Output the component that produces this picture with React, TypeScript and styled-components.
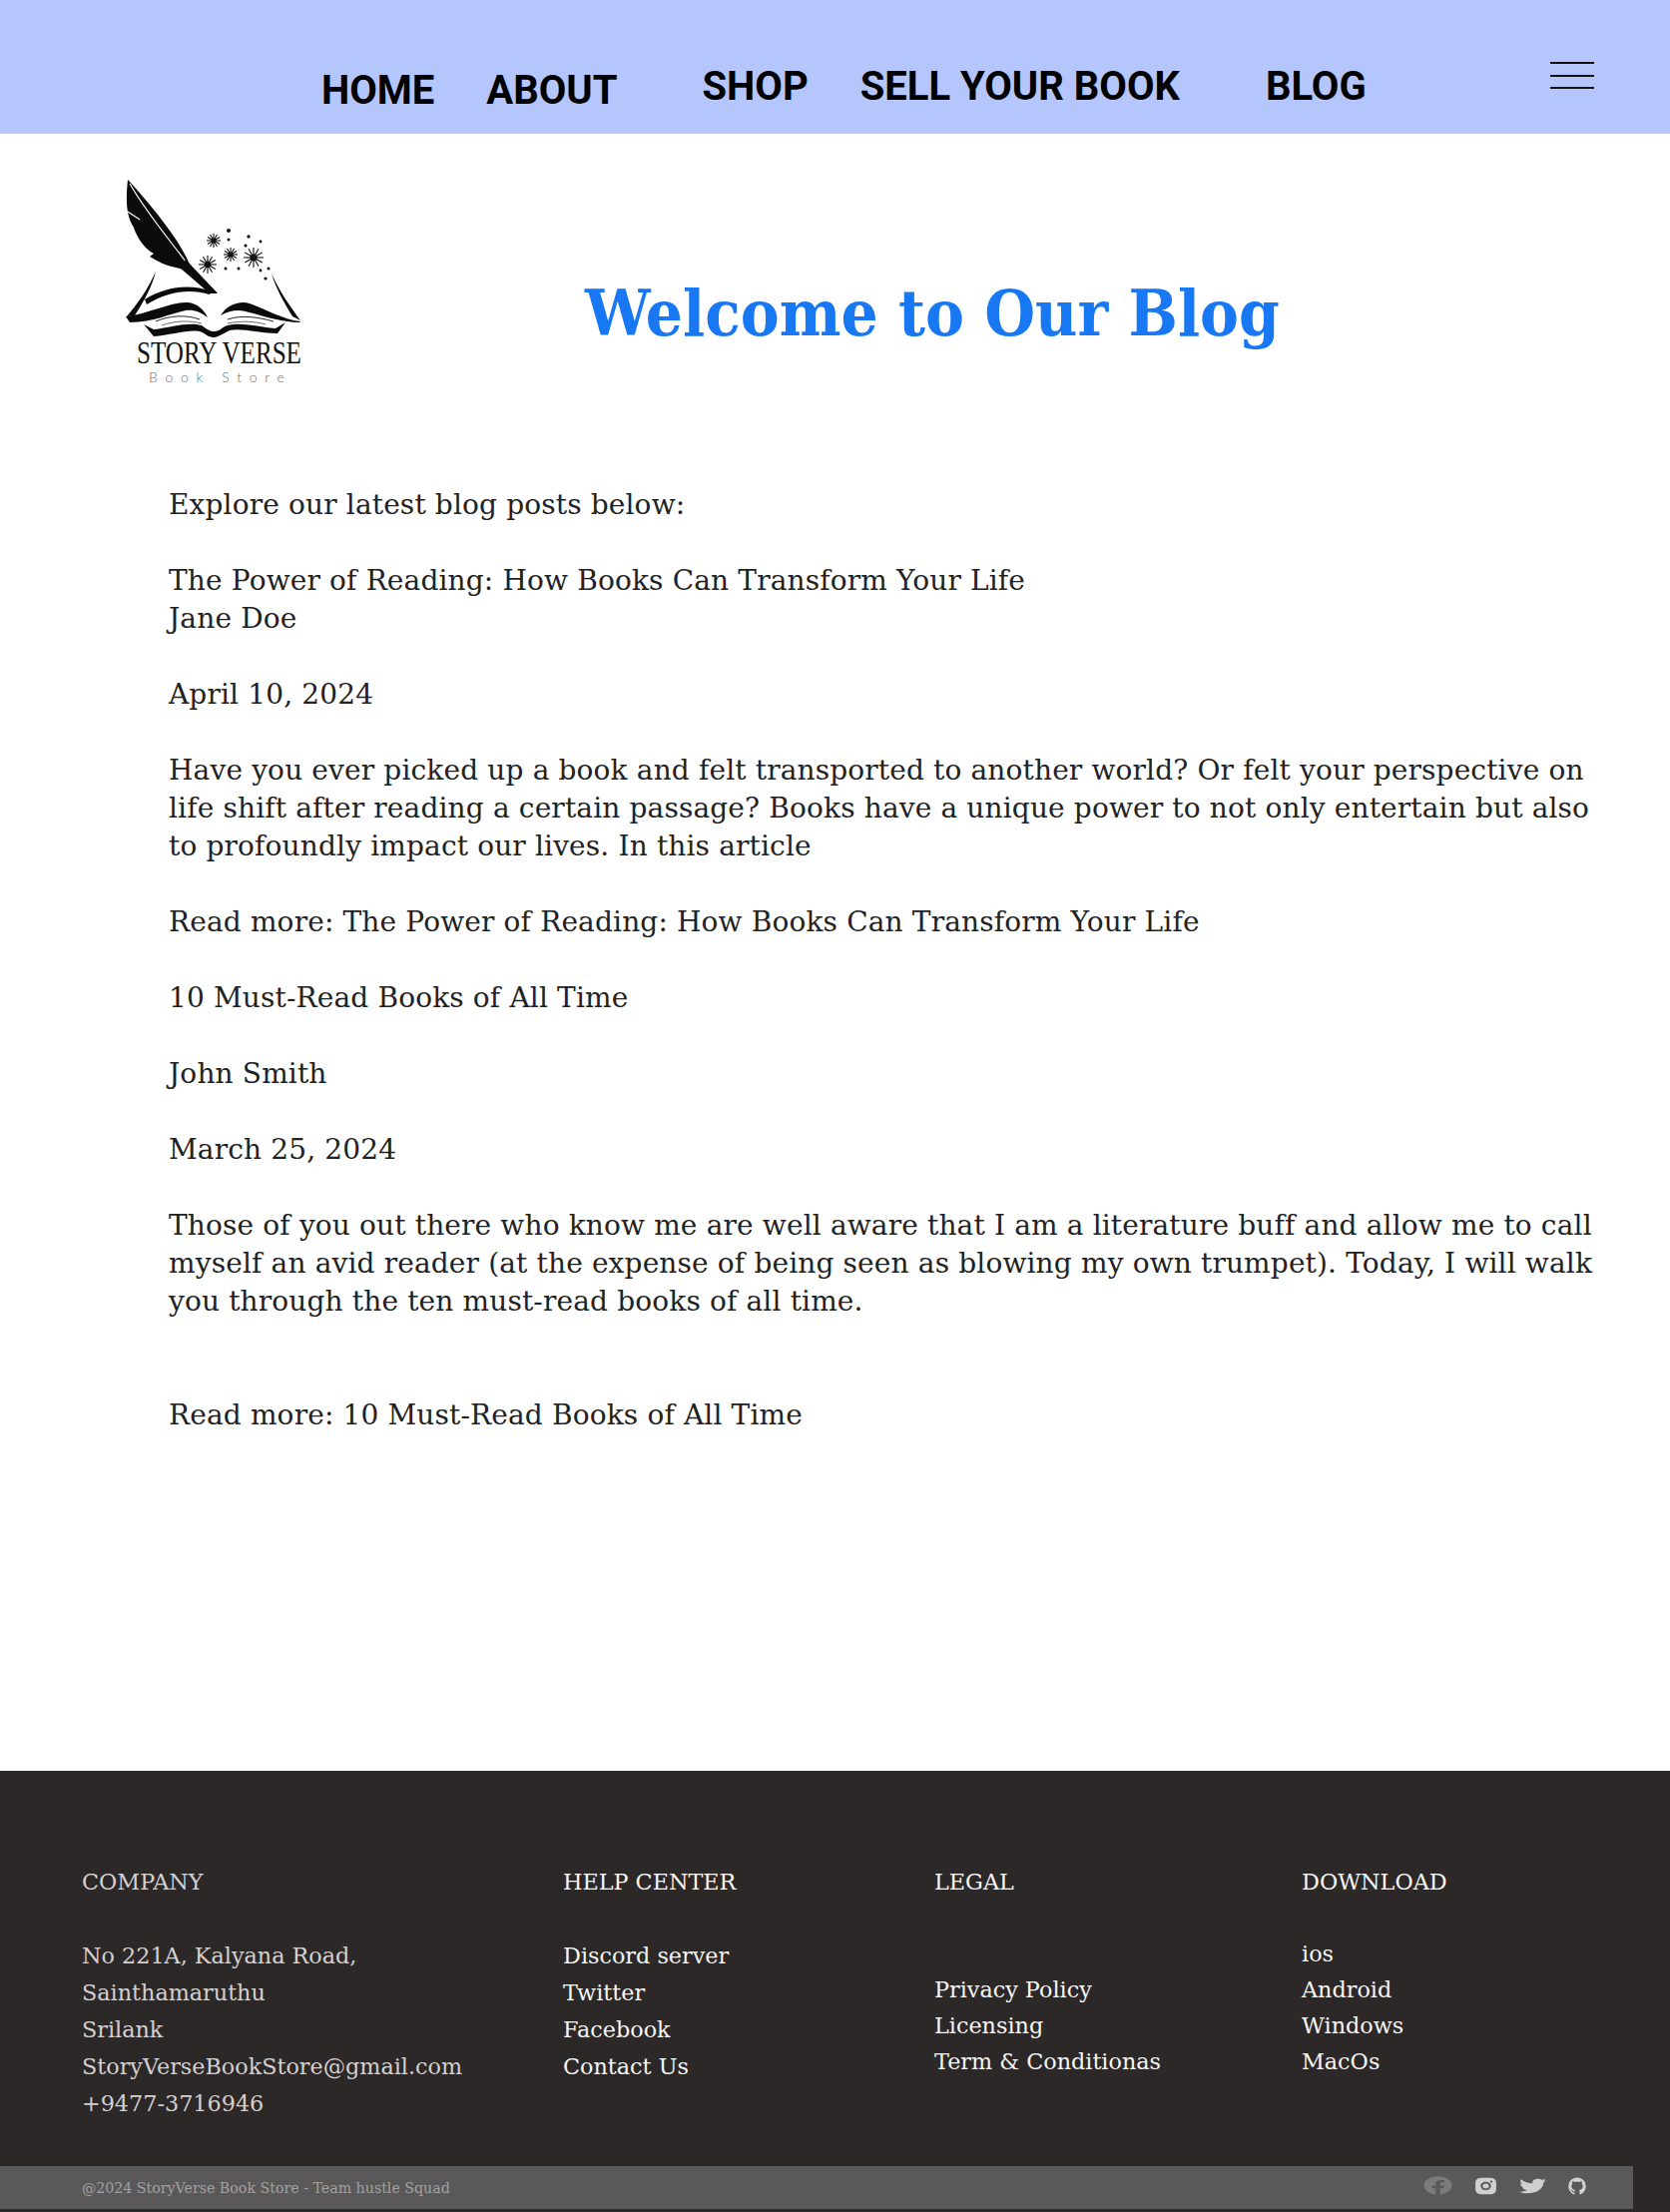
import React from 'react';
import styled, { createGlobalStyle } from 'styled-components';
import { FaFacebook, FaTwitter } from 'react-icons/fa';
import { RiInstagramFill } from 'react-icons/ri';
import { AiOutlineGithub } from 'react-icons/ai';

const GlobalStyle = createGlobalStyle`
  html, body {
    margin: 0;
    padding: 0;
    background: #fff;
  }
  body {
    font-family: "DejaVu Serif", "Liberation Serif", serif;
  }
`;

const Page = styled.div`
  width: 1673px;
  height: 2216px;
  display: flex;
  flex-direction: column;
  overflow: hidden;
`;

const Header = styled.header`
  height: 134px;
  flex: none;
  background: #b4c6fb;
  display: flex;
  align-items: flex-start;
  padding-left: 322px;
  box-sizing: border-box;
`;

const NavLink = styled.a<{ $left: number; $top: number }>`
  margin-left: ${(p) => p.$left}px;
  margin-top: ${(p) => p.$top}px;
  font-family: Roboto, "Liberation Sans", sans-serif;
  font-weight: 700;
  font-size: 40px;
  line-height: 46px;
  color: #000;
  white-space: nowrap;
`;

const Burger = styled.button`
  margin-left: auto;
  margin-right: 76px;
  margin-top: 62px;
  width: 44px;
  height: 27px;
  padding: 0;
  border: 0;
  background: none;
  display: flex;
  flex-direction: column;
  justify-content: space-between;
`;

const BurgerLine = styled.span`
  height: 2px;
  background: #111;
`;

const Hero = styled.div`
  display: flex;
  align-items: flex-start;
  padding: 36px 0 0 110px;
  height: 310px;
  box-sizing: border-box;
  flex: none;
`;

const LogoBlock = styled.div`
  width: 210px;
  flex: none;
  display: flex;
  flex-direction: column;
`;

const LogoArt = styled.svg`
  width: 210px;
  height: 168px;
  display: block;
`;

const Logotype = styled.div`
  padding-left: 27px;
  height: 31px;
  font-family: "Liberation Serif", serif;
  font-size: 32px;
  line-height: 30px;
  color: #111;
  white-space: nowrap;
  transform: scaleX(0.785);
  transform-origin: 27px 0;
`;

const Tagline = styled.div`
  padding-left: 39px;
  font-family: Lato, sans-serif;
  font-size: 14px;
  line-height: 17px;
  font-weight: 300;
  letter-spacing: 7.7px;
  color: #6f6f6f;
  white-space: nowrap;
`;

const Title = styled.h1`
  margin: 108px 0 0 266px;
  font-family: "DejaVu Serif", serif;
  font-weight: 700;
  font-size: 58.4px;
  line-height: 72px;
  color: #1877f2;
  white-space: nowrap;
  transform: scaleY(1.08);
`;

const Article = styled.main`
  flex: 1;
  padding: 43px 40px 0 169px;
`;

const Para = styled.p<{ $after?: number }>`
  margin: 0 0 ${(p) => p.$after ?? 38}px;
  font-size: 28px;
  letter-spacing: 0.15px;
  line-height: 38px;
  color: #222;
  white-space: nowrap;
`;

const Footer = styled.footer`
  flex: none;
  height: 442px;
  background: #2c2828;
  display: flex;
  flex-direction: column;
`;

const Columns = styled.div`
  height: 396px;
  padding: 93px 0 0 82px;
  box-sizing: border-box;
  display: flex;
  flex: none;
`;

const Column = styled.div<{ $width: number; $muted?: boolean }>`
  width: ${(p) => p.$width}px;
  flex: none;
  color: ${(p) => (p.$muted ? '#d3d0d0' : '#f6f6f6')};
  font-size: 22.3px;
`;

const ColumnTitle = styled.h4`
  margin: 0;
  font-weight: 400;
  font-size: 22.3px;
  line-height: 37px;
`;

const ColumnList = styled.ul<{ $top: number; $step: number }>`
  list-style: none;
  margin: ${(p) => p.$top}px 0 0;
  padding: 0;
  line-height: ${(p) => p.$step}px;
`;

const BottomBar = styled.div`
  width: 1636px;
  height: 43px;
  background: #5a5859;
  display: flex;
  align-items: center;
  box-sizing: border-box;
  padding-left: 82px;
`;

const Copy = styled.span`
  font-size: 14.2px;
  color: #a3a1a1;
`;

const Socials = styled.div`
  margin-left: auto;
  margin-right: 46px;
  margin-bottom: 4px;
  display: flex;
  align-items: center;
  gap: 21px;
  height: 24px;
  color: #d0d0d0;
`;

const Spark = ({ x, y, r }: { x: number; y: number; r: number }) => (
  <g stroke="#111" strokeWidth="1.1">
    {Array.from({ length: 12 }).map((_, i) => {
      const a = (i * Math.PI) / 6;
      return <line key={i} x1={x} y1={y} x2={x + r * Math.cos(a)} y2={y + r * Math.sin(a)} />;
    })}
    <circle cx={x} cy={y} r={r * 0.36} fill="#111" stroke="none" />
  </g>
);

const StoryVerseLogo = () => (
  <LogoBlock>
    <LogoArt viewBox="0 0 210 168">
      {/* quill */}
      <path
        d="M18 10 C16 30 16 45 24 58 C28 70 36 80 44 84 L40 87 C48 92 56 96 66 98 L74 100 L108 124 L80 95 C72 75 50 45 18 10Z"
        fill="#0b0b0b"
      />
      <path d="M20 14 C36 42 58 68 76 92" stroke="#fff" strokeWidth="1.2" fill="none" />
      <path d="M18 42 L30 50" stroke="#fff" strokeWidth="1.2" />
      <path d="M76 90 L108 124 L100 124 L70 98Z" fill="#0b0b0b" />
      {/* book pages */}
      <path d="M46 102 C38 120 28 134 17 147 L25 146 C34 132 42 118 46 102Z" fill="#0b0b0b" />
      <path d="M35 130 C56 117 80 114 102 122 L100 125 C80 119 58 122 37 135Z" fill="#0b0b0b" />
      <path d="M162 104 C170 122 180 136 191 151 L183 147 C174 132 166 118 162 104Z" fill="#0b0b0b" />
      <path
        d="M16 147 C40 144 62 132 78 133 C88 134 94 140 98 148 C90 142 84 140 76 141 C60 144 44 153 20 153Z"
        fill="#0b0b0b"
      />
      <path
        d="M191 152 C168 149 148 134 134 133 C124 133 116 138 111 146 C120 141 128 140 136 142 C150 145 170 153 190 153Z"
        fill="#0b0b0b"
      />
      <path d="M46 152 C60 146 76 145 90 150" stroke="#222" strokeWidth="1" fill="none" />
      <path d="M52 156 C66 151 80 151 92 154" stroke="#444" strokeWidth="0.8" fill="none" />
      <path d="M118 150 C132 145 150 148 164 152" stroke="#222" strokeWidth="1" fill="none" />
      <path d="M118 154 C132 151 146 152 156 155" stroke="#444" strokeWidth="0.8" fill="none" />
      <path
        d="M34 155 L44 160 C62 158 78 152 92 156 C98 160 100 162 105 162 C110 162 112 158 118 156 C132 152 150 158 166 159 L176 153 L168 164 C148 164 132 158 120 161 C112 165 108 168 104 168 C98 168 96 164 90 162 C78 160 60 166 44 167Z"
        fill="#0b0b0b"
      />
      {/* sparks */}
      <Spark x={104} y={71} r={7} />
      <Spark x={98} y={95} r={9} />
      <Spark x={121} y={85} r={7} />
      <Spark x={144} y={88} r={10} />
      {[
        [119, 61, 2], [119, 70, 1.5], [139, 67, 1.7], [151, 72, 1.4], [136, 76, 1.6], [116, 99, 1.5],
        [129, 99, 1.5], [151, 101, 1.4], [159, 99, 1.5], [156, 109, 1.6],
      ].map(([cx, cy, r]) => (
        <circle key={`${cx}-${cy}`} cx={cx} cy={cy} r={r} fill="#111" />
      ))}
    </LogoArt>
    <Logotype>STORY VERSE</Logotype>
    <Tagline>Book Store</Tagline>
  </LogoBlock>
);

export default function App() {
  return (
    <Page>
      <GlobalStyle />
      <Header>
        <NavLink $left={0} $top={68}>HOME</NavLink>
        <NavLink $left={52} $top={68}>ABOUT</NavLink>
        <NavLink $left={85} $top={64}>SHOP</NavLink>
        <NavLink $left={52} $top={64}>SELL YOUR BOOK</NavLink>
        <NavLink $left={86} $top={64}>BLOG</NavLink>
        <Burger aria-label="menu">
          <BurgerLine />
          <BurgerLine />
          <BurgerLine />
        </Burger>
      </Header>
      <Hero>
        <StoryVerseLogo />
        <Title>Welcome to Our Blog</Title>
      </Hero>
      <Article>
        <Para>Explore our latest blog posts below:</Para>
        <Para>
          The Power of Reading: How Books Can Transform Your Life
          <br />
          Jane Doe
        </Para>
        <Para>April 10, 2024</Para>
        <Para>
          Have you ever picked up a book and felt transported to another world? Or felt your perspective on
          <br />
          life shift after reading a certain passage? Books have a unique power to not only entertain but also
          <br />
          to profoundly impact our lives. In this article
        </Para>
        <Para>Read more: The Power of Reading: How Books Can Transform Your Life</Para>
        <Para>10 Must-Read Books of All Time</Para>
        <Para>John Smith</Para>
        <Para>March 25, 2024</Para>
        <Para $after={76}>
          Those of you out there who know me are well aware that I am a literature buff and allow me to call
          <br />
          myself an avid reader (at the expense of being seen as blowing my own trumpet). Today, I will walk
          <br />
          you through the ten must-read books of all time.
        </Para>
        <Para>Read more: 10 Must-Read Books of All Time</Para>
      </Article>
      <Footer>
        <Columns>
          <Column $width={482} $muted>
            <ColumnTitle>COMPANY</ColumnTitle>
            <ColumnList $top={37} $step={37}>
              <li>No 221A, Kalyana Road,</li>
              <li>Sainthamaruthu</li>
              <li>Srilank</li>
              <li>StoryVerseBookStore@gmail.com</li>
              <li>+9477-3716946</li>
            </ColumnList>
          </Column>
          <Column $width={372}>
            <ColumnTitle>HELP CENTER</ColumnTitle>
            <ColumnList $top={37} $step={37}>
              <li>Discord server</li>
              <li>Twitter</li>
              <li>Facebook</li>
              <li>Contact Us</li>
            </ColumnList>
          </Column>
          <Column $width={368}>
            <ColumnTitle>LEGAL</ColumnTitle>
            <ColumnList $top={71} $step={36}>
              <li>Privacy Policy</li>
              <li>Licensing</li>
              <li>Term &amp; Conditionas</li>
            </ColumnList>
          </Column>
          <Column $width={300}>
            <ColumnTitle>DOWNLOAD</ColumnTitle>
            <ColumnList $top={35} $step={36}>
              <li>ios</li>
              <li>Android</li>
              <li>Windows</li>
              <li>MacOs</li>
            </ColumnList>
          </Column>
        </Columns>
        <BottomBar>
          <Copy>@2024 StoryVerse Book Store - Team hustle Squad</Copy>
          <Socials>
            <FaFacebook size={19} color="#7b7b7b" preserveAspectRatio="none" style={{ width: 29 }} />
            <RiInstagramFill size={20} preserveAspectRatio="none" style={{ width: 25 }} />
            <FaTwitter size={18} preserveAspectRatio="none" style={{ width: 27 }} />
            <AiOutlineGithub size={20} />
          </Socials>
        </BottomBar>
      </Footer>
    </Page>
  );
}
